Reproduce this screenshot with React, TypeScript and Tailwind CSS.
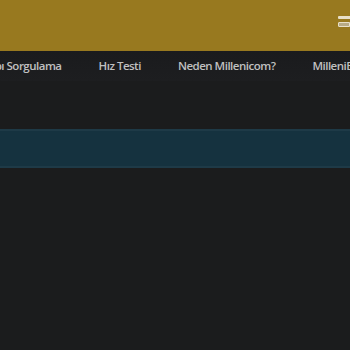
import React from "react";

export default function App() {
  const items = ["Altyapı Sorgulama", "Hız Testi", "Neden Millenicom?", "MilleniBlog"];
  return (
    <div className="w-[350px] h-[350px] overflow-hidden bg-[#1b1c1d]" style={{ fontFamily: '"Open Sans", sans-serif' }}>
      <header className="h-[51px] bg-[#98791f] flex justify-end items-start">
        <div className="mt-[16px] w-[12px] flex flex-col gap-[3px]">
          <div className="h-[3px] bg-[#e8e0c8] rounded-l-[1px]" />
          <div className="h-[5px] border border-[#e8e0c8] bg-[#b8ab85] rounded-l-[1px]" />
        </div>
      </header>
      <nav className="h-[30px] bg-gradient-to-b from-[#1a1b1d] to-[#1d1e20] overflow-hidden">
        <div className="flex items-center h-full whitespace-nowrap ml-[-31px] gap-[37px] text-[11.5px] tracking-[-0.5px] font-semibold text-[#c0c0c0]">
          {items.map((t) => (
            <span key={t}>{t}</span>
          ))}
        </div>
      </nav>
      <div className="h-[48px]" />
      <div className="h-[39px] bg-[#15323f] border-t-2 border-t-[#1e3a47] border-b-2 border-b-[#1e3a47]" />
    </div>
  );
}
